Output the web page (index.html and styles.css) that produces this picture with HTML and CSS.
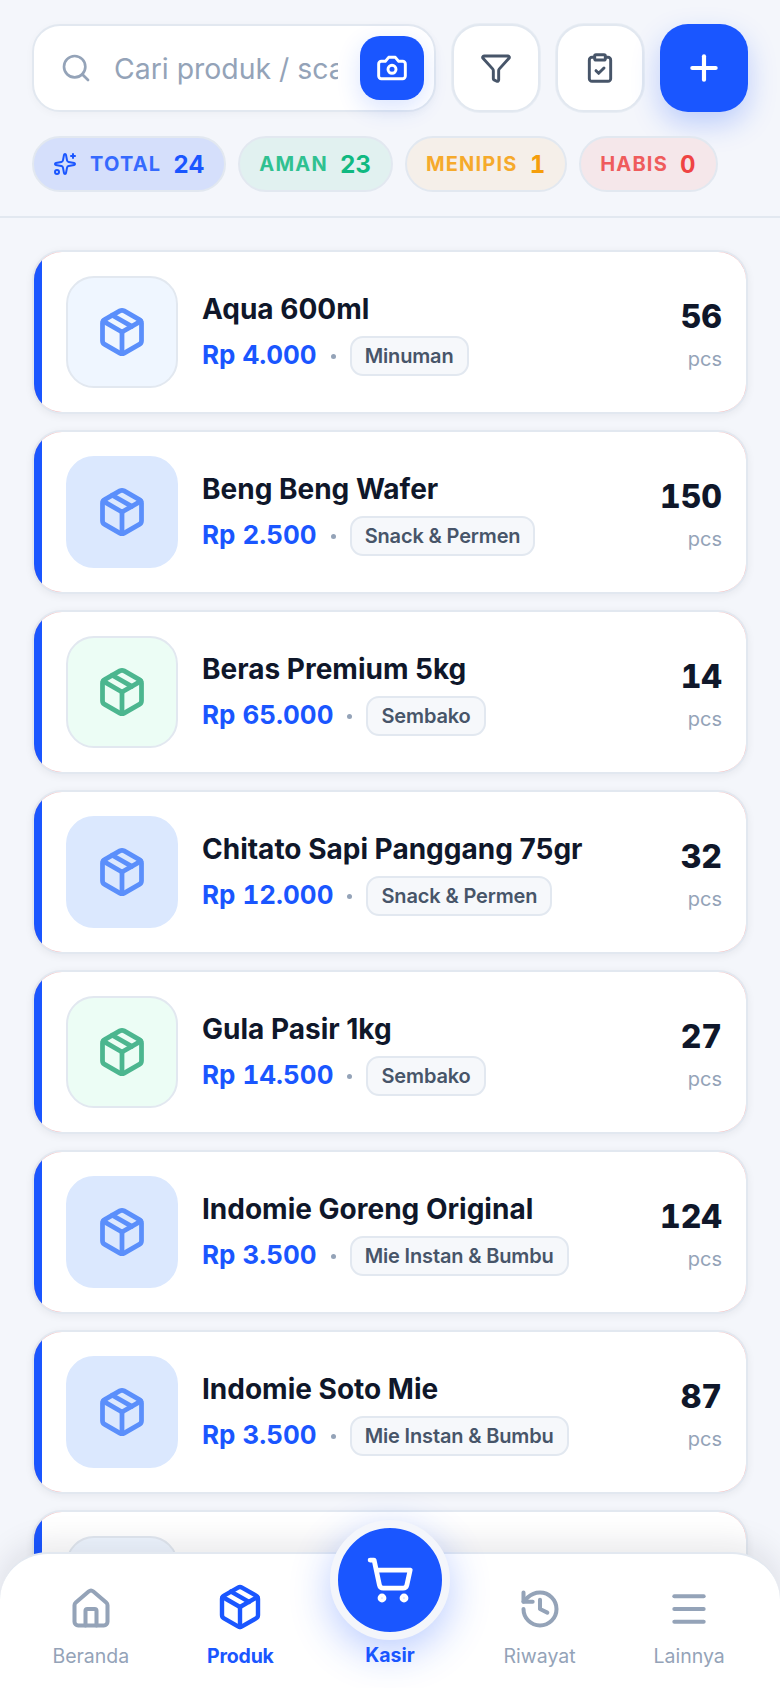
FILE: index.html
```html
<!DOCTYPE html>
<html lang="id">
<head>
<meta charset="utf-8">
<title>Produk</title>
<link rel="stylesheet" href="styles.css">
</head>
<body>
<svg class="sprite" xmlns="http://www.w3.org/2000/svg">
  <symbol id="i-package" viewBox="0 0 24 24"><path d="M11 21.73a2 2 0 0 0 2 0l7-4A2 2 0 0 0 21 16V8a2 2 0 0 0-1-1.73l-7-4a2 2 0 0 0-2 0l-7 4A2 2 0 0 0 3 8v8a2 2 0 0 0 1 1.73z"/><path d="M12 22V12"/><path d="m3.3 7 8.7 5 8.7-5"/><path d="m7.5 4.27 9 5.15"/></symbol>
</svg>
<div class="app">
  <header class="top">
    <div class="toolbar">
      <label class="search">
        <svg class="ico ico-search" viewBox="0 0 24 24"><path d="m21 21-4.34-4.34"/><circle cx="11" cy="11" r="8"/></svg>
        <input class="search-input" type="text" placeholder="Cari produk / scan barcode">
        <span class="cam">
          <svg class="ico ico-cam" viewBox="0 0 24 24"><path d="M14.5 4h-5L7 7H4a2 2 0 0 0-2 2v9a2 2 0 0 0 2 2h16a2 2 0 0 0 2-2V9a2 2 0 0 0-2-2h-3l-2.5-3z"/><circle cx="12" cy="13" r="3"/></svg>
        </span>
      </label>
      <button class="tool">
        <svg class="ico ico-tool" viewBox="0 0 24 24"><path d="M10 20a1 1 0 0 0 .553.895l2 1A1 1 0 0 0 14 21v-7a2 2 0 0 1 .517-1.341L21.74 4.67A1 1 0 0 0 21 3H3a1 1 0 0 0-.742 1.67l7.225 7.989A2 2 0 0 1 10 14z"/></svg>
      </button>
      <button class="tool">
        <svg class="ico ico-tool" viewBox="0 0 24 24"><rect x="8" y="2" width="8" height="4" rx="1"/><path d="M16 4h2a2 2 0 0 1 2 2v14a2 2 0 0 1-2 2H6a2 2 0 0 1-2-2V6a2 2 0 0 1 2-2h2"/><path d="m9 14 2 2 4-4"/></svg>
      </button>
      <button class="add">
        <svg class="ico ico-plus" viewBox="0 0 24 24"><path d="M5 12h14"/><path d="M12 5v14"/></svg>
      </button>
    </div>
    <div class="chips">
      <div class="chip chip-total">
        <svg class="ico ico-spark" viewBox="0 0 24 24"><path d="M11.017 2.814a1 1 0 0 1 1.966 0l1.051 5.558a2 2 0 0 0 1.594 1.594l5.558 1.051a1 1 0 0 1 0 1.966l-5.558 1.051a2 2 0 0 0-1.594 1.594l-1.051 5.558a1 1 0 0 1-1.966 0l-1.051-5.558a2 2 0 0 0-1.594-1.594l-5.558-1.051a1 1 0 0 1 0-1.966l5.558-1.051a2 2 0 0 0 1.594-1.594z"/><path d="M20 2v4"/><path d="M22 4h-4"/><circle cx="4" cy="20" r="2"/></svg>
        <span class="chip-label">TOTAL</span><span class="chip-num">24</span>
      </div>
      <div class="chip chip-safe"><span class="chip-label">AMAN</span><span class="chip-num">23</span></div>
      <div class="chip chip-low"><span class="chip-label">MENIPIS</span><span class="chip-num">1</span></div>
      <div class="chip chip-out"><span class="chip-label">HABIS</span><span class="chip-num">0</span></div>
    </div>
  </header>

  <main class="list">
    <article class="card"><span class="bar"></span><div class="card-body">
      <div class="thumb thumb-pale"><svg class="ico ico-box"><use href="#i-package"/></svg></div>
      <div class="info"><h3 class="name">Aqua 600ml</h3><div class="meta"><span class="price">Rp 4.000</span><span class="dot"></span><span class="tag">Minuman</span></div></div>
      <div class="stock"><span class="qty">56</span><span class="unit">pcs</span></div>
    </div></article>
    <article class="card"><span class="bar"></span><div class="card-body">
      <div class="thumb thumb-blue"><svg class="ico ico-box"><use href="#i-package"/></svg></div>
      <div class="info"><h3 class="name">Beng Beng Wafer</h3><div class="meta"><span class="price">Rp 2.500</span><span class="dot"></span><span class="tag">Snack &amp; Permen</span></div></div>
      <div class="stock"><span class="qty">150</span><span class="unit">pcs</span></div>
    </div></article>
    <article class="card"><span class="bar"></span><div class="card-body">
      <div class="thumb thumb-green"><svg class="ico ico-box"><use href="#i-package"/></svg></div>
      <div class="info"><h3 class="name">Beras Premium 5kg</h3><div class="meta"><span class="price">Rp 65.000</span><span class="dot"></span><span class="tag">Sembako</span></div></div>
      <div class="stock"><span class="qty">14</span><span class="unit">pcs</span></div>
    </div></article>
    <article class="card"><span class="bar"></span><div class="card-body">
      <div class="thumb thumb-blue"><svg class="ico ico-box"><use href="#i-package"/></svg></div>
      <div class="info"><h3 class="name">Chitato Sapi Panggang 75gr</h3><div class="meta"><span class="price">Rp 12.000</span><span class="dot"></span><span class="tag">Snack &amp; Permen</span></div></div>
      <div class="stock"><span class="qty">32</span><span class="unit">pcs</span></div>
    </div></article>
    <article class="card"><span class="bar"></span><div class="card-body">
      <div class="thumb thumb-green"><svg class="ico ico-box"><use href="#i-package"/></svg></div>
      <div class="info"><h3 class="name">Gula Pasir 1kg</h3><div class="meta"><span class="price">Rp 14.500</span><span class="dot"></span><span class="tag">Sembako</span></div></div>
      <div class="stock"><span class="qty">27</span><span class="unit">pcs</span></div>
    </div></article>
    <article class="card"><span class="bar"></span><div class="card-body">
      <div class="thumb thumb-blue"><svg class="ico ico-box"><use href="#i-package"/></svg></div>
      <div class="info"><h3 class="name">Indomie Goreng Original</h3><div class="meta"><span class="price">Rp 3.500</span><span class="dot"></span><span class="tag">Mie Instan &amp; Bumbu</span></div></div>
      <div class="stock"><span class="qty">124</span><span class="unit">pcs</span></div>
    </div></article>
    <article class="card"><span class="bar"></span><div class="card-body">
      <div class="thumb thumb-blue"><svg class="ico ico-box"><use href="#i-package"/></svg></div>
      <div class="info"><h3 class="name">Indomie Soto Mie</h3><div class="meta"><span class="price">Rp 3.500</span><span class="dot"></span><span class="tag">Mie Instan &amp; Bumbu</span></div></div>
      <div class="stock"><span class="qty">87</span><span class="unit">pcs</span></div>
    </div></article>
    <article class="card"><span class="bar"></span><div class="card-body">
      <div class="thumb thumb-pale"></div>
    </div></article>
  </main>

  <nav class="nav">
    <a class="nav-item">
      <svg class="ico ico-nav" viewBox="0 0 24 24"><path d="M15 21v-8a1 1 0 0 0-1-1h-4a1 1 0 0 0-1 1v8"/><path d="M3 10a2 2 0 0 1 .709-1.528l7-5.999a2 2 0 0 1 2.582 0l7 5.999A2 2 0 0 1 21 10v9a2 2 0 0 1-2 2H5a2 2 0 0 1-2-2z"/></svg>
      <span>Beranda</span>
    </a>
    <a class="nav-item nav-active">
      <svg class="ico ico-nav-active" viewBox="0 0 24 24"><path d="M11 21.73a2 2 0 0 0 2 0l7-4A2 2 0 0 0 21 16V8a2 2 0 0 0-1-1.73l-7-4a2 2 0 0 0-2 0l-7 4A2 2 0 0 0 3 8v8a2 2 0 0 0 1 1.73z"/><path d="M12 22V12"/><path d="m3.3 7 8.7 5 8.7-5"/><path d="m7.5 4.27 9 5.15"/></svg>
      <span>Produk</span>
    </a>
    <a class="nav-item nav-kasir">
      <span class="fab">
        <svg class="ico ico-cart" viewBox="0 0 24 24"><circle cx="8" cy="21" r="1"/><circle cx="19" cy="21" r="1"/><path d="M2.05 2.05h2l2.66 12.42a2 2 0 0 0 2 1.58h9.78a2 2 0 0 0 1.95-1.57l1.65-7.43H5.12"/></svg>
      </span>
      <span>Kasir</span>
    </a>
    <a class="nav-item">
      <svg class="ico ico-nav" viewBox="0 0 24 24"><path d="M3 12a9 9 0 1 0 9-9 9.75 9.75 0 0 0-6.74 2.74L3 8"/><path d="M3 3v5h5"/><path d="M12 7v5l4 2"/></svg>
      <span>Riwayat</span>
    </a>
    <a class="nav-item">
      <svg class="ico ico-nav" viewBox="0 0 24 24"><path d="M4 5h16"/><path d="M4 12h16"/><path d="M4 19h16"/></svg>
      <span>Lainnya</span>
    </a>
  </nav>
</div>
</body>
</html>
```

FILE: styles.css
```css
* { box-sizing: border-box; }
html, body { margin: 0; padding: 0; }
body { background: #f4f6fb; font-family: Inter, "Noto Sans", sans-serif; color: #0f172a; }
.sprite { display: none; }
.ico { fill: none; stroke: currentColor; stroke-linecap: round; stroke-linejoin: round; display: block; flex: none; }

.app { position: relative; width: 780px; height: 1688px; overflow: hidden; background: #f4f6fb; }

.top { padding: 24px 32px; border-bottom: 2px solid #e2e8f0; }
.toolbar { display: flex; align-items: center; gap: 16px; }
.search { flex: 1; min-width: 0; height: 88px; display: flex; align-items: center; background: #fff; border: 2px solid #e2e8f0; border-radius: 28px; padding: 0 10px 0 26px; box-shadow: 0 2px 8px rgba(15, 23, 42, .03); }
.ico-search { width: 32px; height: 32px; color: #94a3b8; stroke-width: 2; }
.search-input { flex: 1; min-width: 0; margin: 0 22px; border: 0; outline: 0; padding: 0; background: transparent; font: 400 28.4px Inter, sans-serif; color: #0f172a; }
.search-input::placeholder { color: #94a3b8; opacity: 1; }
.cam { width: 64px; height: 64px; border-radius: 20px; background: #1a56ff; display: flex; align-items: center; justify-content: center; box-shadow: 0 8px 24px rgba(26, 86, 255, .16); flex: none; }
.ico-cam { width: 32px; height: 32px; color: #fff; stroke-width: 2.2; }
.tool { width: 88px; height: 88px; background: #fff; border: 2px solid #e2e8f0; border-radius: 28px; padding: 0; display: flex; align-items: center; justify-content: center; box-shadow: 0 0 0 1px #e8edf4; flex: none; }
.ico-tool { width: 32px; height: 32px; color: #475569; stroke-width: 2.2; }
.add { width: 88px; height: 88px; background: #1a56ff; border: 0; border-radius: 28px; padding: 0; display: flex; align-items: center; justify-content: center; box-shadow: 0 12px 28px rgba(26, 86, 255, .25); flex: none; }
.ico-plus { width: 40px; height: 40px; color: #fff; stroke-width: 2.5; }

.chips { display: flex; gap: 12px; margin-top: 24px; }
.chip { height: 56px; display: flex; align-items: center; gap: 12px; padding: 0 20px 0 19px; border: 2px solid #e2e8f0; border-radius: 28px; }
.chip-label { font-size: 20px; font-weight: 700; letter-spacing: 1.2px; opacity: .85; }
.chip-num { font-size: 24px; font-weight: 700; font-variant-numeric: tabular-nums; }
.chip-total { background: #d5dffb; color: #1a56ff; }
.ico-spark { width: 24px; height: 24px; stroke-width: 2; margin-right: 1px; }
.chip-safe { background: #e1f1f0; color: #10b981; }
.chip-low { background: #f5efe9; color: #f59e0b; }
.chip-out { background: #f5e7ea; color: #ef4444; }

.list { padding: 32px 32px 0; display: flex; flex-direction: column; gap: 16px; }
.card { display: flex; flex: none; height: 164px; background: #fca5a5; border: 2px solid #e2e8f0; border-radius: 30px; overflow: hidden; box-shadow: 0 2px 8px rgba(15, 23, 42, .06); }
.bar { width: 8px; flex: none; background: #1a56ff; }
.card-body { flex: 1; min-width: 0; display: flex; align-items: center; padding: 24px; background: #fff; }
.thumb { width: 112px; height: 112px; flex: none; border-radius: 28px; border: 2px solid #e2e8f0; display: flex; align-items: center; justify-content: center; }
.thumb-pale { background: #eff6ff; color: #5b8ffb; border-color: #e2e8f0; }
.thumb-blue { background: #dbe8fe; color: #5b8ffb; border-color: #dbe8fe; }
.thumb-green { background: #ecfdf5; color: #4cb68f; border-color: #e2e8f0; }
.ico-box { width: 52px; height: 52px; stroke-width: 2.2; }
.info { flex: 1; min-width: 0; margin: 3px 0 0 24px; display: flex; flex-direction: column; gap: 9px; }
.name { margin: 0; font-size: 28px; line-height: 36px; font-weight: 700; color: #0f172a; white-space: nowrap; }
.meta { display: flex; align-items: center; gap: 14px; height: 40px; }
.price { font-size: 26px; font-weight: 700; font-variant-numeric: tabular-nums; color: #1a56ff; white-space: nowrap; margin-bottom: 3px; }
.dot { width: 5px; height: 5px; border-radius: 50%; background: #94a3b8; flex: none; }
.tag { height: 40px; display: flex; align-items: center; padding: 0 13px; background: #f6f8fb; border: 2px solid #e2e8f0; border-radius: 13px; font-size: 20px; letter-spacing: -.15px; font-weight: 600; color: #475569; white-space: nowrap; }
.stock { display: flex; flex-direction: column; align-items: flex-end; flex: none; margin: 4px 0 0 16px; gap: 10px; }
.qty { font-size: 32px; line-height: 40px; font-weight: 800; color: #0f172a; font-variant-numeric: tabular-nums; }
.unit { font-size: 20px; line-height: 24px; color: #94a3b8; }

.nav { position: absolute; left: 0; right: 0; bottom: 0; height: 136px; display: grid; grid-template-columns: repeat(5, 1fr); padding: 0 16px; background: #fff; border-top: 2px solid #e2e8f0; border-radius: 48px 48px 0 0; box-shadow: 0 -8px 32px rgba(15, 23, 42, .1); }
.nav-item { position: relative; display: flex; flex-direction: column; align-items: center; justify-content: flex-end; padding-bottom: 20px; font-size: 19.5px; line-height: 24px; color: #94a3b8; }
.ico-nav { width: 44px; height: 44px; stroke-width: 2.2; margin-bottom: 13px; }
.ico-nav-active { width: 48px; height: 48px; stroke-width: 2.2; margin-bottom: 13px; }
.nav-active { color: #1a56ff; font-weight: 700; letter-spacing: -.2px; }
.nav-kasir { color: #1a56ff; font-weight: 700; padding-bottom: 21px; }
.fab { position: absolute; left: 50%; top: -34px; width: 120px; height: 120px; margin-left: -60px; border-radius: 50%; background: #1a56ff; border: 8px solid #f4f6fb; display: flex; align-items: center; justify-content: center; box-shadow: 0 12px 40px rgba(26, 86, 255, .3); }
.ico-cart { width: 48px; height: 48px; color: #fff; stroke-width: 2.4; }
```
